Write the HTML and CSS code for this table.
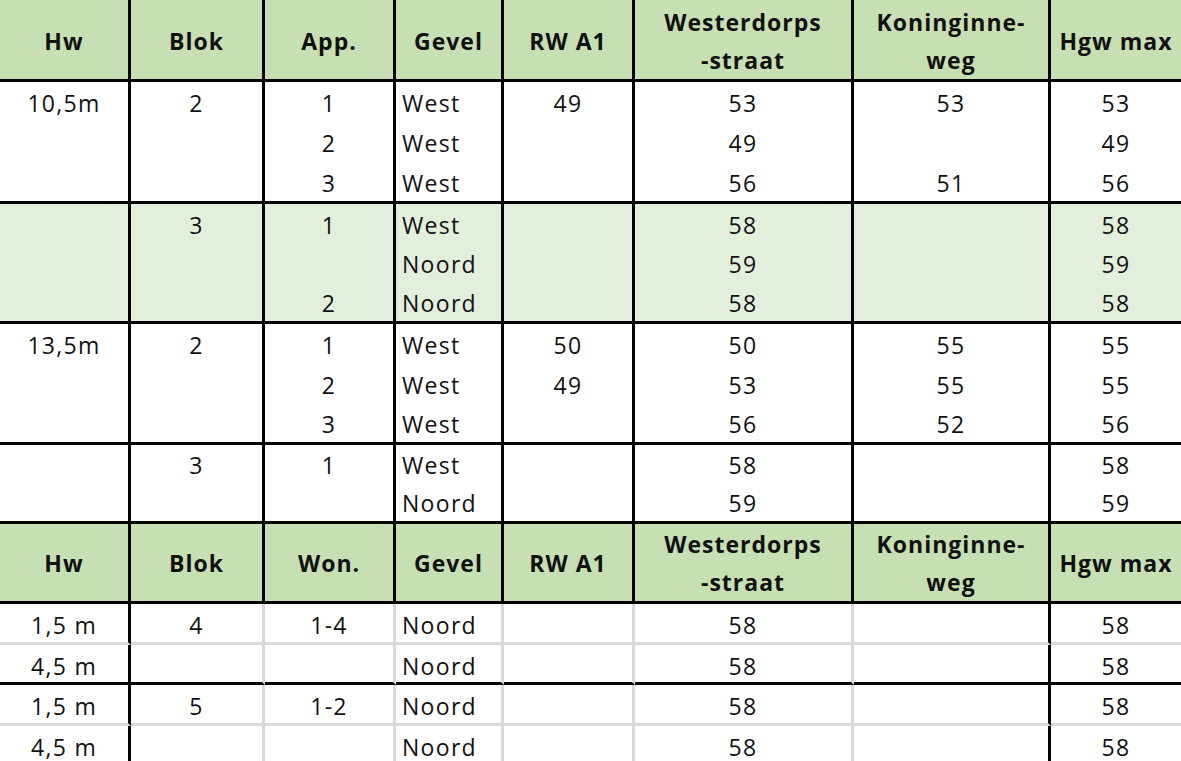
FILE: index.html
```html
<!DOCTYPE html>
<html lang="nl">
<head>
<meta charset="utf-8">
<title>Geluidsbelasting per gevel</title>
<link rel="stylesheet" href="styles.css">
</head>
<body>
<table class="sheet">
  <colgroup>
    <col class="c1"><col class="c2"><col class="c3"><col class="c4"><col class="c5"><col class="c6"><col class="c7"><col class="c8">
  </colgroup>
  <tbody>
    <tr class="head h1">
      <th>Hw</th><th>Blok</th><th>App.</th><th>Gevel</th><th>RW A1</th><th>Westerdorps<br>-straat</th><th>Koninginne-<br>weg</th><th>Hgw max</th>
    </tr>

    <tr class="r40">
      <td>10,5m</td><td>2</td><td class="num">1</td><td class="gev">West</td><td>49</td><td>53</td><td>53</td><td>53</td>
    </tr>
    <tr class="r40">
      <td></td><td></td><td class="num">2</td><td class="gev">West</td><td></td><td>49</td><td></td><td>49</td>
    </tr>
    <tr class="r42 end">
      <td></td><td></td><td class="num">3</td><td class="gev">West</td><td></td><td>56</td><td>51</td><td>56</td>
    </tr>

    <tr class="r39 tint">
      <td></td><td>3</td><td class="num">1</td><td class="gev">West</td><td></td><td>58</td><td></td><td>58</td>
    </tr>
    <tr class="r39 tint">
      <td></td><td></td><td class="num"></td><td class="gev">Noord</td><td></td><td>59</td><td></td><td>59</td>
    </tr>
    <tr class="r42 tint end">
      <td></td><td></td><td class="num">2</td><td class="gev">Noord</td><td></td><td>58</td><td></td><td>58</td>
    </tr>

    <tr class="r40">
      <td>13,5m</td><td>2</td><td class="num">1</td><td class="gev">West</td><td>50</td><td>50</td><td>55</td><td>55</td>
    </tr>
    <tr class="r39">
      <td></td><td></td><td class="num">2</td><td class="gev">West</td><td>49</td><td>53</td><td>55</td><td>55</td>
    </tr>
    <tr class="r42 end">
      <td></td><td></td><td class="num">3</td><td class="gev">West</td><td></td><td>56</td><td>52</td><td>56</td>
    </tr>

    <tr class="r38">
      <td></td><td>3</td><td class="num">1</td><td class="gev">West</td><td></td><td>58</td><td></td><td>58</td>
    </tr>
    <tr class="r41 end">
      <td></td><td></td><td class="num"></td><td class="gev">Noord</td><td></td><td>59</td><td></td><td>59</td>
    </tr>

    <tr class="head h2">
      <th>Hw</th><th>Blok</th><th>Won.</th><th>Gevel</th><th>RW A1</th><th>Westerdorps<br>-straat</th><th>Koninginne-<br>weg</th><th>Hgw max</th>
    </tr>

    <tr class="low r41 grid">
      <td>1,5 m</td><td>4</td><td>1-4</td><td class="gev">Noord</td><td></td><td>58</td><td></td><td>58</td>
    </tr>
    <tr class="low r40 end">
      <td>4,5 m</td><td></td><td></td><td class="gev">Noord</td><td></td><td>58</td><td></td><td>58</td>
    </tr>
    <tr class="low r41 grid">
      <td>1,5 m</td><td>5</td><td>1-2</td><td class="gev">Noord</td><td></td><td>58</td><td></td><td>58</td>
    </tr>
    <tr class="low r41 grid">
      <td>4,5 m</td><td></td><td></td><td class="gev">Noord</td><td></td><td>58</td><td></td><td>58</td>
    </tr>
  </tbody>
</table>
</body>
</html>
```

FILE: styles.css
```css
html, body {
  margin: 0;
  padding: 0;
  background: #ffffff;
}

.sheet {
  border-collapse: separate;
  border-spacing: 0;
  table-layout: fixed;
  width: 1181px;
  font-family: "Open Sans", "Noto Sans", sans-serif;
  font-size: 23px;
  letter-spacing: 1.3px;
  color: #111111;
}

.c1 { width: 131px; }
.c2 { width: 134px; }
.c3 { width: 131px; }
.c4 { width: 108px; }
.c5 { width: 131px; }
.c6 { width: 219px; }
.c7 { width: 197px; }
.c8 { width: 130px; }

.sheet th,
.sheet td {
  box-sizing: border-box;
  padding: 2px 1px 0;
  text-align: center;
  border-right: 3px solid #000000;
  white-space: nowrap;
  overflow: hidden;
  line-height: 30px;
  vertical-align: middle;
}

.sheet th:last-child,
.sheet td:last-child {
  border-right: 0;
}

.head th {
  background: #c6e0b4;
  font-weight: 700;
  letter-spacing: 1px;
  border-bottom: 3px solid #000000;
  line-height: 38px;
}

.h1 th { height: 82px; padding-top: 2px; }
.h2 th { height: 80px; padding-top: 1px; }

.sheet td.gev {
  text-align: left;
  padding-left: 6px;
}

.r38 td { height: 38px; }
.r39 td { height: 39px; }
.r40 td { height: 40px; }
.r41 td { height: 41px; }
.r42 td { height: 42px; }

.end td {
  border-bottom: 3px solid #000000;
}

.tint td {
  background: #e2efda;
}

.low td {
  padding-top: 4px;
  border-right-color: #d9d9d9;
}

.low td:first-child,
.low td:nth-child(7) {
  border-right-color: #000000;
}

.grid td {
  border-bottom: 3px solid #d9d9d9;
}
```
